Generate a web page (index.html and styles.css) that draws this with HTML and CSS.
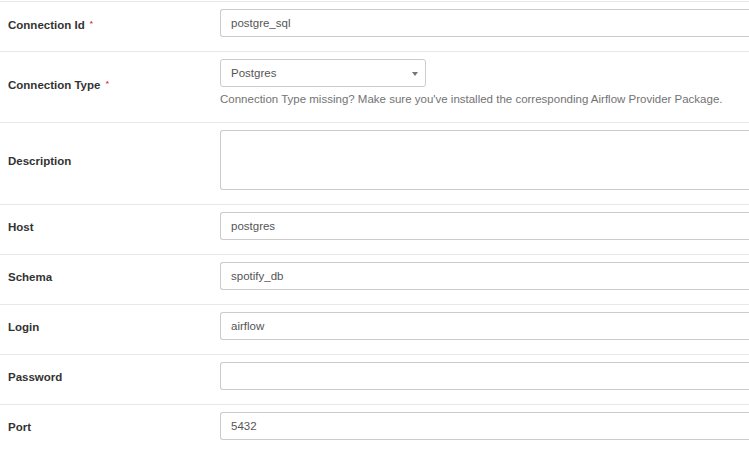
FILE: index.html
```html
<!DOCTYPE html>
<html lang="en">
<head>
<meta charset="utf-8">
<title>Edit Connection</title>
<link rel="stylesheet" href="styles.css">
</head>
<body>
<form class="conn-form">
  <div class="row">
    <div class="label">Connection Id <span class="req">*</span></div>
    <div class="field"><input class="control" type="text" value="postgre_sql"></div>
  </div>
  <div class="row">
    <div class="label">Connection Type <span class="req">*</span></div>
    <div class="field">
      <div class="select"><span>Postgres</span><svg class="caret" width="6" height="4" viewBox="0 0 6 4"><path d="M0 0H6L3 4Z" fill="#777"/></svg></div>
      <div class="help">Connection Type missing? Make sure you've installed the corresponding Airflow Provider Package.</div>
    </div>
  </div>
  <div class="row">
    <div class="label">Description</div>
    <div class="field"><textarea class="control area"></textarea></div>
  </div>
  <div class="row">
    <div class="label">Host</div>
    <div class="field"><input class="control" type="text" value="postgres"></div>
  </div>
  <div class="row">
    <div class="label">Schema</div>
    <div class="field"><input class="control" type="text" value="spotify_db"></div>
  </div>
  <div class="row">
    <div class="label">Login</div>
    <div class="field"><input class="control" type="text" value="airflow"></div>
  </div>
  <div class="row">
    <div class="label">Password</div>
    <div class="field"><input class="control" type="password" value=""></div>
  </div>
  <div class="row">
    <div class="label">Port</div>
    <div class="field"><input class="control" type="text" value="5432"></div>
  </div>
</form>
</body>
</html>
```
FILE: styles.css
```css
html, body {
  margin: 0;
  padding: 0;
  overflow: hidden;
  background: #fff;
}
body {
  font-family: "Liberation Sans", Arial, sans-serif;
  font-size: 11.5px;
  color: #333;
  padding-top: 1px;
}
.conn-form {
  width: 100%;
}
.row {
  display: grid;
  grid-template-columns: 220px 1fr;
  border-top: 1px solid #e8e8e8;
}
.label {
  align-self: center;
  padding: 0 8px 5px;
  font-weight: bold;
  line-height: 16px;
}
.req {
  color: #e0313b;
  font-size: 8px;
  vertical-align: 3px;
  font-weight: bold;
  margin-left: 2px;
}
.field {
  padding: 7px 0 14px;
}
.control {
  display: block;
  box-sizing: border-box;
  width: 100%;
  height: 28px;
  margin: 0;
  padding: 0 10px;
  border: 1px solid #ccc;
  border-right: none;
  border-radius: 3px 0 0 3px;
  font-family: "Liberation Sans", Arial, sans-serif;
  font-size: 11.5px;
  color: #555;
  background: #fff;
  outline: none;
}
.area {
  height: 60px;
  resize: none;
}
.select {
  box-sizing: border-box;
  width: 206px;
  height: 28px;
  padding: 0 7px 0 10px;
  border: 1px solid #ccc;
  border-radius: 3px;
  display: flex;
  align-items: center;
  justify-content: space-between;
  color: #555;
}
.caret {
  display: block;
  margin-top: 1px;
}
.help {
  margin-top: 4px;
  line-height: 17px;
  color: #737373;
}
```
